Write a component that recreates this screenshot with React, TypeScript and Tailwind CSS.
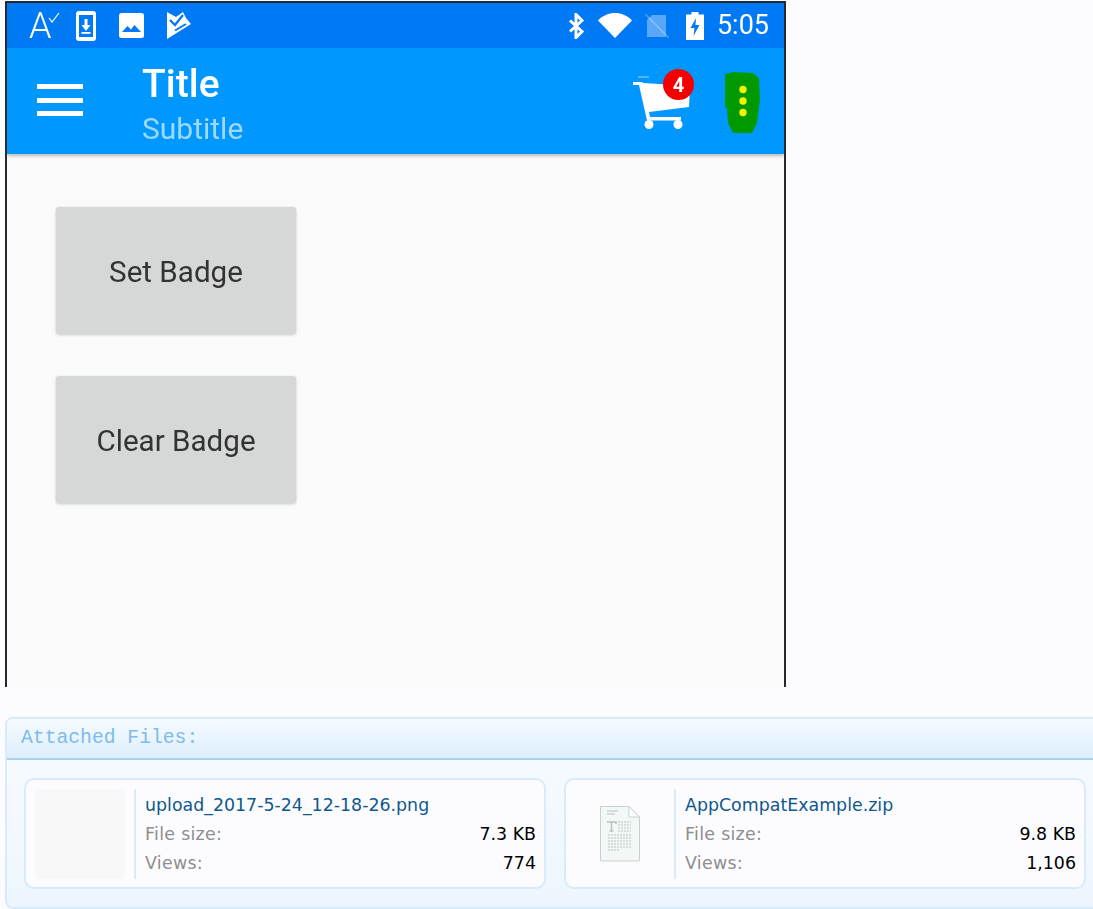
const roboto = "font-['Roboto',sans-serif]";

function PhoneDownloadIcon() {
  return (
    <svg width="20" height="30" viewBox="0 0 20 30" className="ml-[18px]">
      <rect x="0" y="0" width="20" height="30" rx="3" fill="#fff" />
      <rect x="3" y="4" width="14" height="22" fill="#0079F5" />
      <path d="M8.500 8h3v6h3L10 20l-4.500-6h3z" fill="#fff" />
      <rect x="5.500" y="21" width="9" height="1.800" fill="#fff" />
    </svg>
  );
}

function ImageIcon() {
  return (
    <svg width="25" height="25" viewBox="0 0 25 25" className="ml-[23px]">
      <rect width="25" height="25" rx="2.500" fill="#fff" />
      <path d="M3 19l5.500-6 3.500 3.500 3.500-4.500 6.500 7z" fill="#0079F5" />
    </svg>
  );
}

function FlagCheckIcon() {
  return (
    <svg width="25" height="27" viewBox="0 0 25 27" className="ml-[22px]">
      <path d="M1 0l9 5 7-5 3 6 5 6L1 27z" fill="#fff" />
      <path d="M4 8l5 5 8-10" fill="none" stroke="#0079F5" strokeWidth="2.200" />
      <path d="M9 18.500L20 12" fill="none" stroke="#0079F5" strokeWidth="2" />
    </svg>
  );
}

function BluetoothIcon() {
  return (
    <svg width="17" height="26" viewBox="0 0 17 26" className="ml-[1px]">
      <path d="M2 7.500l12 11-6 6V1.500l6 6-12 11" fill="none" stroke="#fff" strokeWidth="3" />
    </svg>
  );
}

function WifiIcon() {
  return (
    <svg width="34" height="25" viewBox="0 0 34 25" className="ml-[13px]">
      <path d="M0 7.500C9-2.500 25-2.500 34 7.500L17 25z" fill="#fff" />
    </svg>
  );
}

function NoSimIcon() {
  return (
    <svg width="24" height="24" viewBox="0 0 24 24" className="ml-[13px]">
      <path d="M7 1h14v22H2V6z" fill="#fff" fillOpacity="0.35" />
      <path d="M0 0l24 24" stroke="#fff" strokeOpacity="0.3" strokeWidth="1.500" />
    </svg>
  );
}

function BatteryIcon() {
  return (
    <svg width="18" height="28" viewBox="0 0 18 28" className="ml-[17px]">
      <path d="M5.500 0h7v2.500H18V28H0V2.500h5.500z" fill="#fff" />
      <path d="M10 6L4.500 16h4L7.500 24 13.500 13h-4z" fill="#0079F5" />
    </svg>
  );
}

function CartIcon() {
  return (
    <svg width="58" height="54" viewBox="0 0 58 54" className="block">
      <path d="M5 1h11" stroke="#fff" strokeOpacity="0.3" strokeWidth="2" />
      <path d="M0 6h9l1 1 47 3-1 21-40 5 1 5h31v3.500H14L6 9H0z" fill="#fff" />
      <circle cx="16" cy="48.500" r="4.500" fill="#fff" />
      <circle cx="45" cy="48.500" r="4.500" fill="#fff" />
    </svg>
  );
}

function GreenOverflow() {
  return (
    <svg width="36" height="62" viewBox="0 0 36 62" className="block">
      <path d="M0 2L8 0 28 1 34 6 35 28 32 51 27 61 8 61 3 51 2 36 0 35z" fill="#009900" />
      <circle cx="18" cy="17.500" r="3.700" fill="#F4F400" />
      <circle cx="18" cy="29" r="3.700" fill="#F4F400" />
      <circle cx="18" cy="40.500" r="3.700" fill="#F4F400" />
    </svg>
  );
}

function TextFileIcon() {
  return (
    <svg width="40" height="56" viewBox="0 0 40 56">
      <path d="M.5.500H29L39.500 11v44H.5z" fill="#F3F7F6" stroke="#C9D1CF" />
      <path d="M29 .500V11h10.500z" fill="#fff" stroke="#C9D1CF" />
      <path d="M7 5h11M7 8h8" stroke="#CDD3D2" strokeWidth="1.500" />
      <path d="M18 16h13M18 19h13M18 22h13M18 25h13" stroke="#CDD3D2" strokeWidth="1.500" strokeDasharray="2 1" />
      <path d="M8 29h24M8 32h24M8 35h24M8 38h24M8 41h24M8 44h12" stroke="#CDD3D2" strokeWidth="1.500" strokeDasharray="2 1" />
      <path d="M7 16h9v2M11.500 16v9M9.500 25h4" stroke="#B9C2C0" strokeWidth="1.500" fill="none" />
    </svg>
  );
}

function BadgeButton({ label }: { label: string }) {
  return (
    <button
      type="button"
      className="w-[240px] h-[127px] pt-[3px] rounded-[3px] bg-[#D6D7D7] text-[29.600px] text-[#333333] shadow-[0_1px_3px_rgba(0,0,0,0.2)]"
    >
      {label}
    </button>
  );
}

function FileCard({
  name,
  size,
  views,
  thumb,
}: {
  name: string;
  size: string;
  views: string;
  thumb: React.ReactNode;
}) {
  return (
    <div className="w-[522px] h-[111px] shrink-0 flex items-center pl-[9px] pr-[8px] rounded-[10px] border-2 border-[#D8EBFB] bg-[#FCFCFF]">
      <div className="w-[90px] h-[90px] flex items-center justify-center shrink-0">{thumb}</div>
      <div className="w-[2px] h-[90px] ml-[9px] bg-[#D8EBFB] shrink-0" />
      <div className="flex-1 ml-[9px] mt-[1px] text-[17.400px] leading-[29px] font-['DejaVu_Sans',sans-serif]">
        <div className="text-[#11588C]">{name}</div>
        <div className="flex justify-between">
          <span className="text-[#8E8E8E] tracking-[0.3px]">File size:</span>
          <span className="text-black">{size}</span>
        </div>
        <div className="flex justify-between">
          <span className="text-[#8E8E8E] tracking-[0.3px]">Views:</span>
          <span className="text-black">{views}</span>
        </div>
      </div>
    </div>
  );
}

export default function App() {
  return (
    <div className="w-[1093px] h-[909px] overflow-hidden bg-[#FCFCFF]">
      <div className="w-[781px] h-[687px] ml-[5px] pt-px">
        <div className={`h-full overflow-hidden border-x-2 border-t-2 border-[#26292D] bg-[#FAFAFA] ${roboto}`}>
          <div className="flex flex-col blur-[0.4px]">
            <div className="h-[45px] flex items-center pl-[22px] pr-[15px] bg-[#0079F5] text-white">
              <div className="relative w-[29px] h-[30px] shrink-0">
                <span className="absolute left-0 top-[-7px] text-[36px] leading-[44px] font-light">A</span>
                <svg width="12" height="12" viewBox="0 0 12 12" className="absolute left-[19px] top-[1px]">
                  <path d="M1 6l3 4 7-9" fill="none" stroke="#fff" strokeWidth="1.200" />
                </svg>
              </div>
              <PhoneDownloadIcon />
              <ImageIcon />
              <FlagCheckIcon />
              <div className="flex-1" />
              <BluetoothIcon />
              <WifiIcon />
              <NoSimIcon />
              <BatteryIcon />
              <span className="ml-[13px] text-[27px] leading-none">5:05</span>
            </div>
            <div className="relative h-[106px] flex items-center pl-[30px] pr-[23px] bg-[#0098FF] shadow-[0_2px_3px_rgba(0,0,0,0.25)]">
              <div className="flex flex-col gap-[8.500px] mt-[-2px] shrink-0">
                <div className="w-[46px] h-[5px] bg-white" />
                <div className="w-[46px] h-[5px] bg-white" />
                <div className="w-[46px] h-[5px] bg-white" />
              </div>
              <div className="ml-[59px] self-start mt-[14px]">
                <div className="text-[39px] leading-[44px] font-medium text-white">Title</div>
                <div className="mt-[5px] text-[30px] leading-[36px] text-[#9FD9FF]">Subtitle</div>
              </div>
              <div className="flex-1" />
              <div className="relative self-start mt-[28px]">
                <CartIcon />
                <span className="absolute left-[30px] top-[-7px] w-[31px] h-[31px] flex items-center justify-center rounded-full bg-[#F40000] text-[20px] font-bold text-white">
                  4
                </span>
              </div>
              <div className="ml-[34px] self-start mt-[24px]">
                <GreenOverflow />
              </div>
            </div>
            <div className="flex flex-col items-start gap-[42px] pl-[49px] pt-[53px]">
              <BadgeButton label="Set Badge" />
              <BadgeButton label="Clear Badge" />
            </div>
          </div>
        </div>
      </div>

      <div className="w-[1100px] h-[192px] ml-[5px] mt-[30px] rounded-[8px] border-2 border-[#D8EBFB] bg-gradient-to-b from-[#F9FCFF] to-[#EDF5FE]">
        <div className="h-[41px] pl-[14px] flex items-center border-b-2 border-[#A9CFEA] bg-gradient-to-b from-[#F6FBFF] to-[#DCEEFC] rounded-t-[6px] font-['Liberation_Mono',monospace] text-[19.700px] text-[#7DBCEC]">
          Attached Files:
        </div>
        <div className="flex gap-[18px] pl-[17px] pt-[18px]">
          <FileCard
            name="upload_2017-5-24_12-18-26.png"
            size="7.3 KB"
            views="774"
            thumb={<div className="w-[90px] h-[90px] rounded-[4px] bg-[#F8F8F8]" />}
          />
          <FileCard name="AppCompatExample.zip" size="9.8 KB" views="1,106" thumb={<TextFileIcon />} />
        </div>
      </div>
    </div>
  );
}
